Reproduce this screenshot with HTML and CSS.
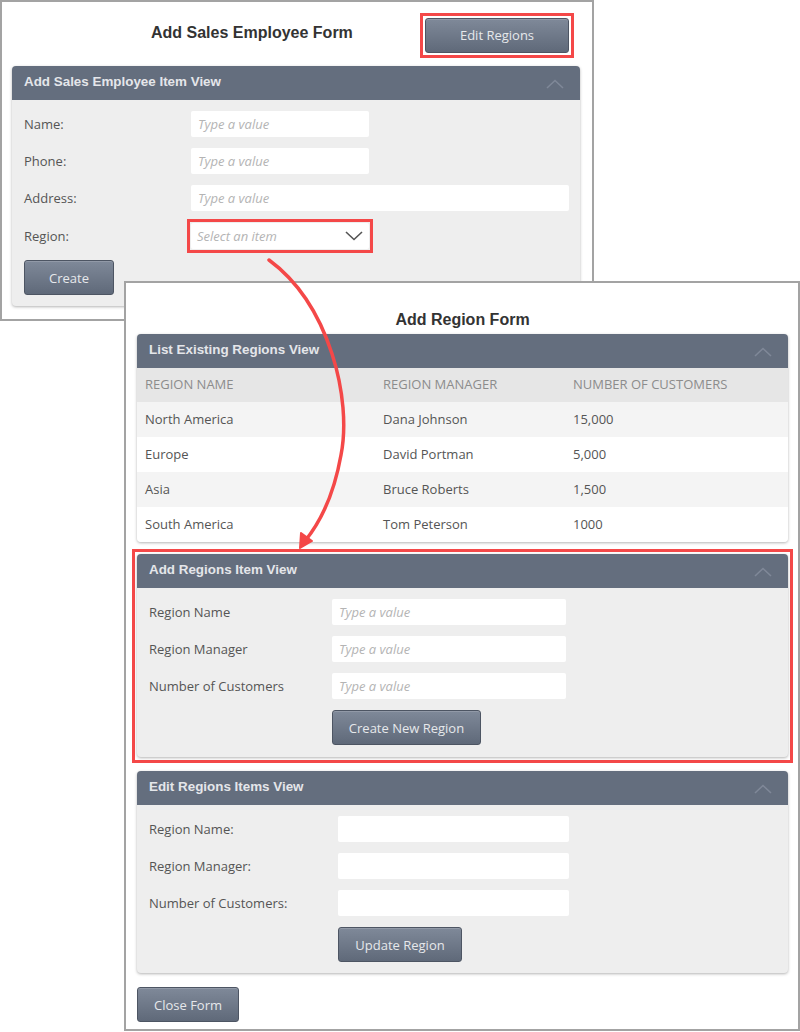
FILE: index.html
```html
<!DOCTYPE html>
<html lang="en">
<head>
    <meta charset="UTF-8">
    <title>Sales Employee Forms</title>
    <link rel="stylesheet" href="styles.css">
</head>
<body>
    <!-- first form window -->
    <div class="window employee-window">
        <div class="window-head">
            <h1 class="window-title">Add Sales Employee Form</h1>
            <div class="mark mark-btn"><button class="btn">Edit Regions</button></div>
        </div>
        <div class="panel">
            <div class="panel-head">
                <span>Add Sales Employee Item View</span>
                <svg class="chevron" width="18" height="10" viewBox="0 0 18 10"><path d="M1 9 L9 1.5 L17 9" fill="none" stroke="#7f8898" stroke-width="1.6"/></svg>
            </div>
            <div class="panel-body emp-body">
                <div class="row"><label>Name:</label><div class="field">Type a value</div></div>
                <div class="row"><label>Phone:</label><div class="field">Type a value</div></div>
                <div class="row"><label>Address:</label><div class="field wide">Type a value</div></div>
                <div class="row"><label>Region:</label>
                    <div class="mark mark-select">
                        <div class="field select">Select an item
                            <svg width="18" height="10" viewBox="0 0 18 10"><path d="M1 1 L9 8.5 L17 1" fill="none" stroke="#555" stroke-width="1.6"/></svg>
                        </div>
                    </div>
                </div>
                <button class="btn">Create</button>
            </div>
        </div>
    </div>

    <!-- second form window -->
    <div class="window region-window">
        <h1 class="window-title centered">Add Region Form</h1>

        <div class="panel">
            <div class="panel-head">
                <span>List Existing Regions View</span>
                <svg class="chevron" width="18" height="10" viewBox="0 0 18 10"><path d="M1 9 L9 1.5 L17 9" fill="none" stroke="#7f8898" stroke-width="1.6"/></svg>
            </div>
            <table class="grid">
                <thead>
                    <tr><th>Region Name</th><th>Region Manager</th><th>Number of Customers</th></tr>
                </thead>
                <tbody>
                    <tr><td>North America</td><td>Dana Johnson</td><td>15,000</td></tr>
                    <tr><td>Europe</td><td>David Portman</td><td>5,000</td></tr>
                    <tr><td>Asia</td><td>Bruce Roberts</td><td>1,500</td></tr>
                    <tr><td>South America</td><td>Tom Peterson</td><td>1000</td></tr>
                </tbody>
            </table>
        </div>

        <div class="mark mark-panel">
            <div class="panel">
                <div class="panel-head">
                    <span>Add Regions Item View</span>
                    <svg class="chevron" width="18" height="10" viewBox="0 0 18 10"><path d="M1 9 L9 1.5 L17 9" fill="none" stroke="#7f8898" stroke-width="1.6"/></svg>
                </div>
                <div class="panel-body add-body">
                    <div class="row"><label>Region Name</label><div class="field">Type a value</div></div>
                    <div class="row"><label>Region Manager</label><div class="field">Type a value</div></div>
                    <div class="row"><label>Number of Customers</label><div class="field">Type a value</div></div>
                    <div class="row"><label></label><button class="btn">Create New Region</button></div>
                </div>
            </div>
        </div>

        <div class="panel">
            <div class="panel-head">
                <span>Edit Regions Items View</span>
                <svg class="chevron" width="18" height="10" viewBox="0 0 18 10"><path d="M1 9 L9 1.5 L17 9" fill="none" stroke="#7f8898" stroke-width="1.6"/></svg>
            </div>
            <div class="panel-body edit-body">
                <div class="row"><label>Region Name:</label><div class="field"></div></div>
                <div class="row"><label>Region Manager:</label><div class="field"></div></div>
                <div class="row"><label>Number of Customers:</label><div class="field"></div></div>
                <div class="row"><label></label><button class="btn">Update Region</button></div>
            </div>
        </div>

        <button class="btn close-btn">Close Form</button>
    </div>

    <!-- annotation arrow -->
    <svg class="arrow" width="800" height="1032" viewBox="0 0 800 1032">
        <path d="M269 260 C330 305 352 400 341 455 C333 500 318 525 305 541" fill="none" stroke="#f44848" stroke-width="3.5" stroke-linecap="round"/>
        <path d="M300 548 L301 533 L312 541 Z" fill="#f44848" stroke="#f44848" stroke-width="2" stroke-linejoin="round"/>
    </svg>
</body>
</html>
```

FILE: styles.css
```css
body {
    margin: 0;
    font-family: "Open Sans", "Liberation Sans", sans-serif;
    font-size: 13px;
    color: #555;
    background: #ffffff;
}
.window {
    position: absolute;
    box-sizing: border-box;
    background: #ffffff;
    border: 2px solid #a3a3a3;
}
.employee-window {
    left: 0;
    top: 0;
    width: 594px;
    height: 321px;
    padding: 0 12px 0 10px;
}
.region-window {
    left: 124px;
    top: 281px;
    width: 676px;
    height: 750px;
    padding: 0 10px 0 11px;
}
.window-head {
    display: flex;
    align-items: center;
    height: 64px;
}
.window-title {
    margin: -3px 0 0 139px;
    font-family: "Liberation Sans", Arial, sans-serif;
    font-size: 16px;
    font-weight: bold;
    color: #333;
}
.window-title.centered {
    margin: 28px 0 5px;
    text-align: center;
    line-height: 18px;
}
.mark {
    border: 3px solid #f44848;
}
.mark-btn {
    display: flex;
    margin: 2px 6px 0 auto;
    padding: 2px;
}
.mark-btn .btn {
    width: 144px;
}
.mark-select {
    margin: -3px -4px -4px;
    padding: 1px;
}
.mark-panel {
    margin: 7px -5px 8px;
    padding: 2px 2px 3px;
}
.btn {
    box-sizing: border-box;
    height: 35px;
    padding: 0;
    white-space: nowrap;
    font-family: "Open Sans", "Liberation Sans", sans-serif;
    font-size: 13px;
    color: #e6e8eb;
    background: linear-gradient(#7f8999, #5f6979);
    border: 1px solid #4d5563;
    border-radius: 3px;
    box-shadow: inset 0 1px 0 rgba(255, 255, 255, 0.15);
}
.panel {
    background: #eeeeee;
    border-radius: 4px;
    box-shadow: 0 1px 3px rgba(0, 0, 0, 0.3);
    overflow: hidden;
}
.panel + .panel {
    margin-top: 13px;
}
.panel-head {
    display: flex;
    align-items: center;
    justify-content: space-between;
    height: 34px;
    padding: 0 16px 0 12px;
    background: #646e7e;
    font-family: "Liberation Sans", Arial, sans-serif;
    font-size: 13.4px;
    font-weight: bold;
    color: #e4e6ea;
}
.panel-head span {
    margin-bottom: 3px;
}
.chevron {
    margin-top: 1px;
}
.panel-body {
    display: flex;
    flex-direction: column;
    align-items: flex-start;
    gap: 11px;
    padding: 11px 11px 11px 12px;
}
.add-body {
    padding-bottom: 12px;
}
.row {
    display: flex;
    align-items: center;
}
.emp-body label {
    width: 167px;
}
.add-body label {
    width: 183px;
}
.edit-body label {
    width: 189px;
}
.field {
    box-sizing: border-box;
    width: 178px;
    height: 26px;
    padding: 0 7px;
    line-height: 26px;
    background: #ffffff;
    border-radius: 2px;
    font-style: italic;
    color: #b4b4b4;
}
.field.wide {
    width: 378px;
}
.add-body .field {
    width: 234px;
}
.edit-body .field {
    width: 231px;
}
.field.select {
    display: flex;
    align-items: center;
    justify-content: space-between;
    padding: 0 6px;
}
.emp-body .btn {
    width: 90px;
}
.add-body .btn {
    width: 149px;
}
.edit-body .btn {
    width: 124px;
}
.grid {
    width: 100%;
    border-collapse: collapse;
    background: #ffffff;
}
.grid th,
.grid td {
    box-sizing: border-box;
    height: 35px;
    padding: 0 0 2px 8px;
    text-align: left;
    font-weight: normal;
}
.grid th {
    height: 34px;
    background: #e6e6e6;
    color: #8c8c8c;
    text-transform: uppercase;
}
.grid th:first-child {
    width: 238px;
}
.grid th:nth-child(2) {
    width: 190px;
}
.grid tbody tr:nth-child(odd) {
    background: #f4f4f4;
}
.close-btn {
    margin-top: 14px;
    width: 102px;
}
.arrow {
    position: absolute;
    left: 0;
    top: 0;
    pointer-events: none;
}
```
